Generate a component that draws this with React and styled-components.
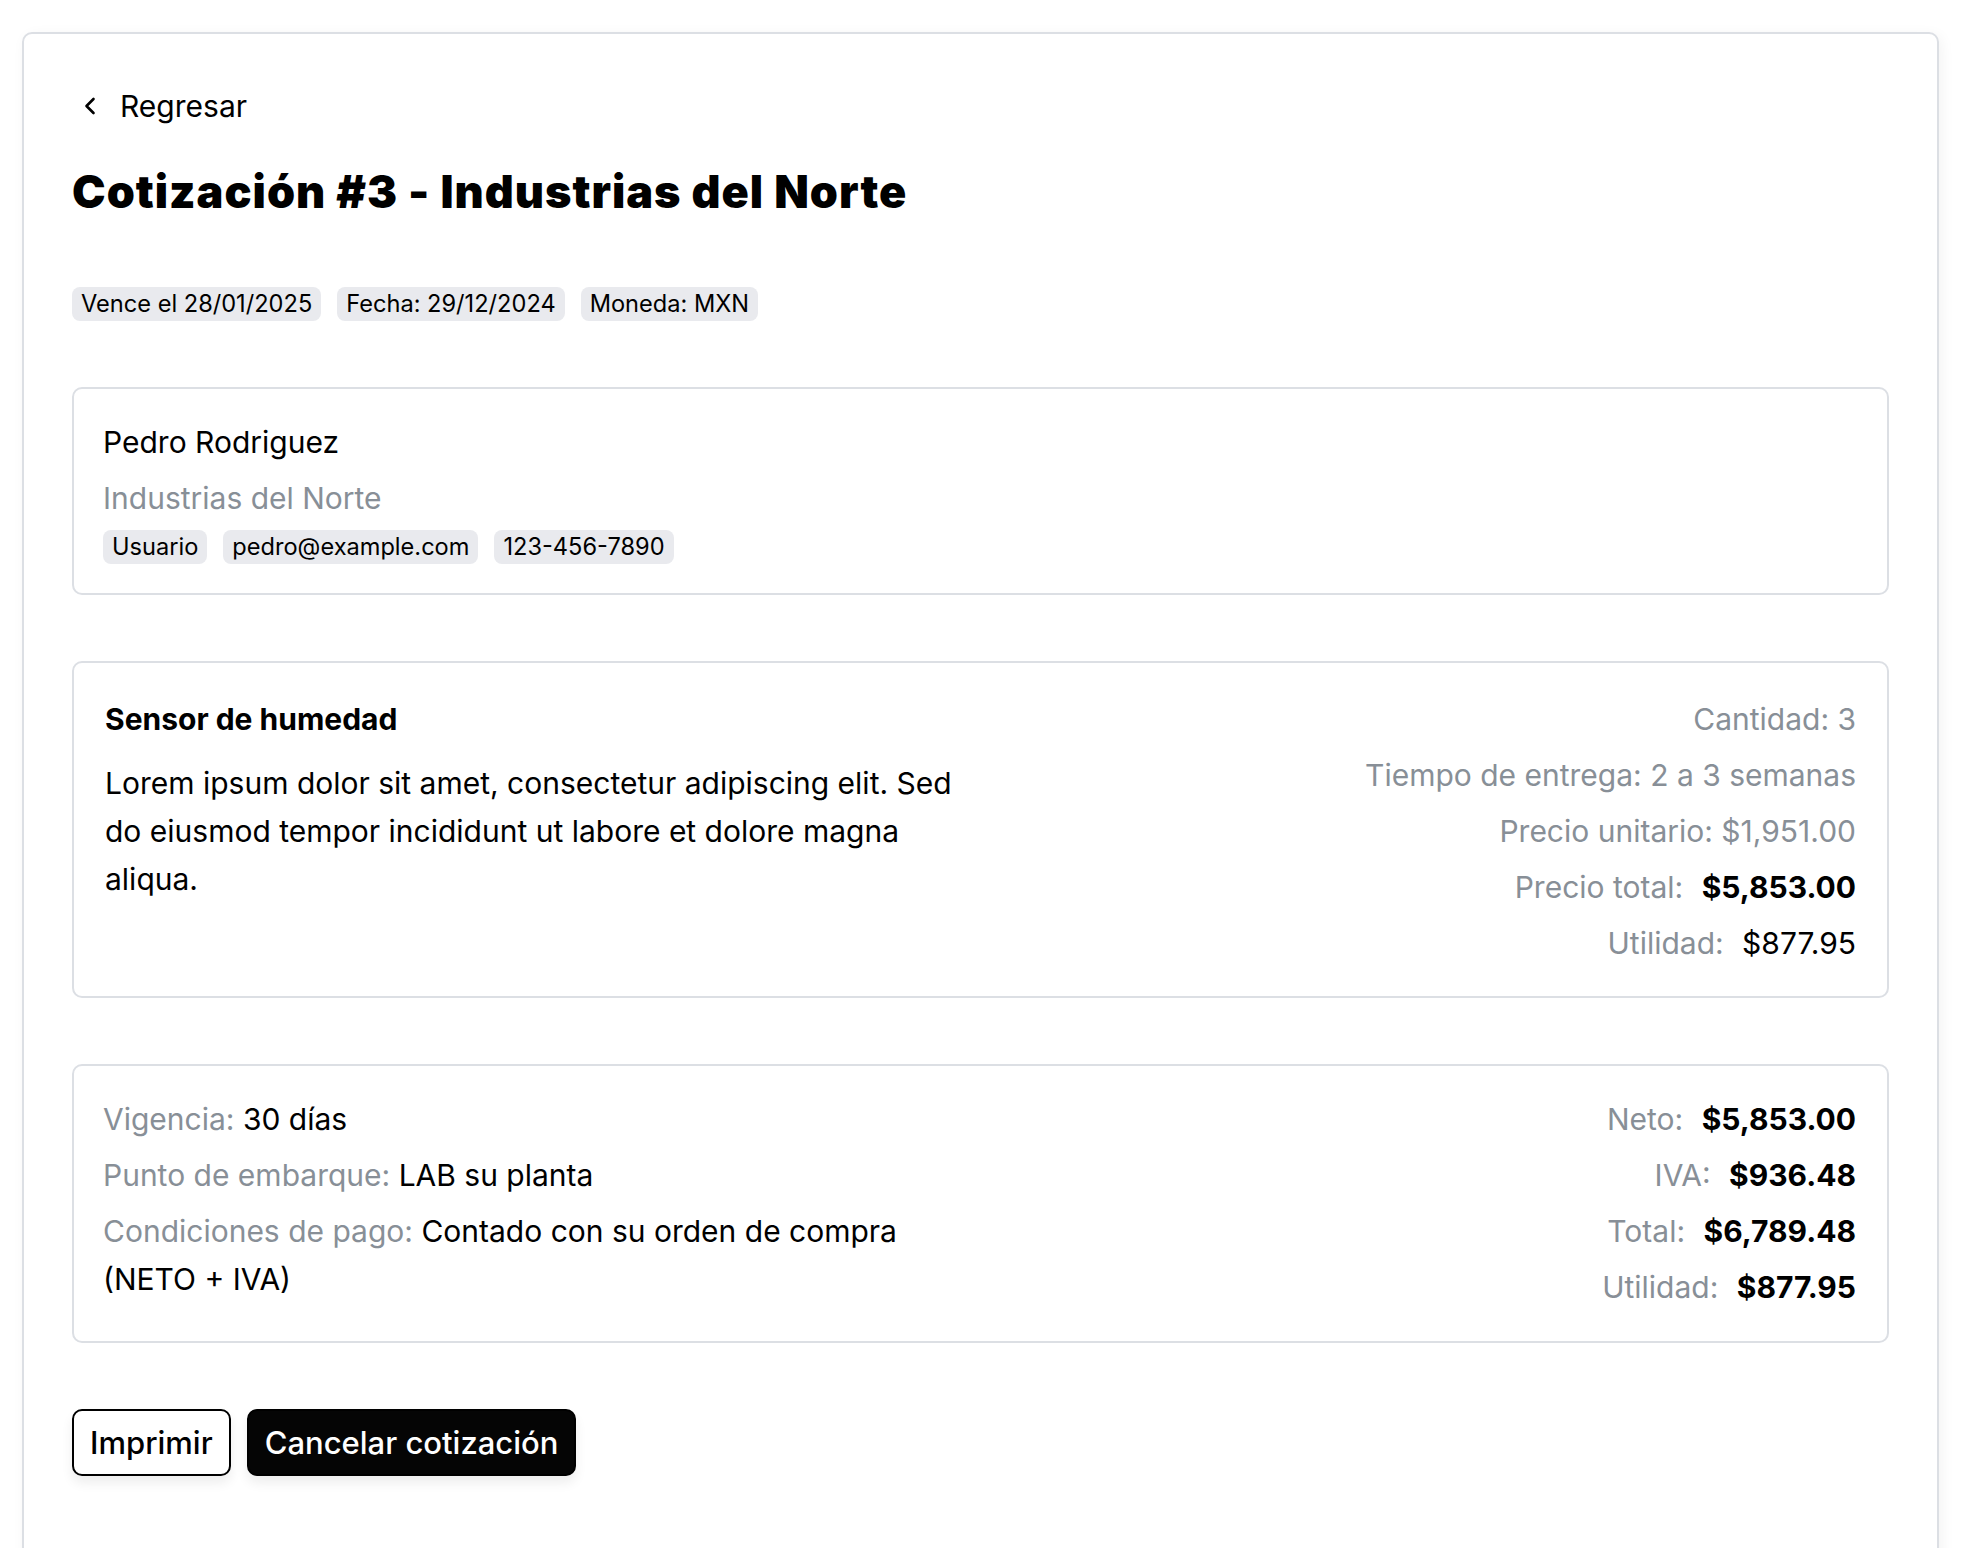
import React from "react"
import styled, { createGlobalStyle } from "styled-components"
import { ChevronLeft } from "lucide-react"

const GlobalStyle = createGlobalStyle`
  body {
    margin: 0;
    background: #ffffff;
    font-family: Inter, "Liberation Sans", sans-serif;
    color: #000000;
  }
`

const Page = styled.div`
  padding: 32px 27px 0 22px;
`

const Sheet = styled.main`
  border: 2px solid #dcdfe4;
  border-radius: 10px;
  padding: 48px 48px 120px;
  box-shadow: 3px 3px 14px rgba(0, 0, 0, 0.05);
  font-size: 30px;
  line-height: 48px;
`

const BackLink = styled.button`
  display: flex;
  align-items: center;
  gap: 16px;
  height: 48px;
  padding: 0 0 0 4px;
  border: 0;
  background: none;
  font: inherit;
  color: inherit;
  cursor: pointer;
`

const Title = styled.h1`
  margin: 34px 0 67px;
  font-size: 45px;
  line-height: 56px;
  font-weight: 900;
  letter-spacing: 1px;
`

const Sections = styled.div`
  display: flex;
  flex-direction: column;
  gap: 66px;
`

const ChipRow = styled.div`
  display: flex;
  flex-wrap: wrap;
  gap: 16px;
`

const Chip = styled.span`
  height: 34px;
  line-height: 34px;
  padding: 0 9px;
  border-radius: 8px;
  background: #e9eaee;
  font-size: 23.6px;
`

const Card = styled.section`
  border: 2px solid #dcdfe4;
  border-radius: 10px;
  padding: ${p => p.$pad};
`

const Stack = styled.div`
  display: flex;
  flex-direction: column;
  gap: ${p => p.$gap || 8}px;
`

const Muted = styled.span`
  color: #888f97;
`

const Split = styled.div`
  display: flex;
  justify-content: space-between;
  gap: 24px;
`

const LeftCol = styled.div`
  flex: 0 0 50%;
`

const RightCol = styled.div`
  display: flex;
  flex-direction: column;
  align-items: flex-end;
  gap: 8px;
  text-align: right;
  color: #888f97;
  white-space: nowrap;
`

const ProductName = styled.h2`
  margin: 0 0 16px;
  font-size: 30px;
  line-height: 48px;
  font-weight: 700;
`

const Description = styled.p`
  margin: 0;
`

const Value = styled.span`
  margin-left: ${p => (p.$spaced ? 10 : 0)}px;
  color: #000000;
  font-weight: ${p => (p.$bold ? 700 : 400)};
`

const Actions = styled.div`
  display: flex;
  gap: 16px;
`

const Button = styled.button`
  height: 67px;
  padding: 0 16px;
  border: 2px solid #000000;
  border-radius: 10px;
  font-family: inherit;
  font-size: 31px;
  font-weight: 500;
  background: ${p => (p.$dark ? "#050505" : "#ffffff")};
  color: ${p => (p.$dark ? "#ffffff" : "#000000")};
  box-shadow: 0 7px 12px rgba(0, 0, 0, 0.07);
  cursor: pointer;
`

const meta = ["Vence el 28/01/2025", "Fecha: 29/12/2024", "Moneda: MXN"]
const contact = ["Usuario", "pedro@example.com", "123-456-7890"]

const totals = [
  ["Neto:", "$5,853.00"],
  ["IVA:", "$936.48"],
  ["Total:", "$6,789.48"],
  ["Utilidad:", "$877.95"],
]

export default function App() {
  return (
    <>
      <GlobalStyle />
      <Page>
        <Sheet>
          <BackLink>
            <ChevronLeft size={28} strokeWidth={2.25} />
            Regresar
          </BackLink>
          <Title>Cotización #3 - Industrias del Norte</Title>

          <Sections>
            <ChipRow>
              {meta.map(m => (
                <Chip key={m}>{m}</Chip>
              ))}
            </ChipRow>

            <Card $pad="29px 29px">
              <Stack>
                <span>Pedro Rodriguez</span>
                <Muted>Industrias del Norte</Muted>
                <ChipRow>
                  {contact.map(c => (
                    <Chip key={c}>{c}</Chip>
                  ))}
                </ChipRow>
              </Stack>
            </Card>

            <Card $pad="32px 31px 29px">
              <Split>
                <LeftCol>
                  <ProductName>Sensor de humedad</ProductName>
                  <Description>
                    Lorem ipsum dolor sit amet, consectetur adipiscing elit. Sed do
                    eiusmod tempor incididunt ut labore et dolore magna aliqua.
                  </Description>
                </LeftCol>
                <RightCol>
                  <span>Cantidad: 3</span>
                  <span>Tiempo de entrega: 2 a 3 semanas</span>
                  <span>Precio unitario: $1,951.00</span>
                  <span>
                    Precio total: <Value $spaced $bold>$5,853.00</Value>
                  </span>
                  <span>
                    Utilidad: <Value $spaced>$877.95</Value>
                  </span>
                </RightCol>
              </Split>
            </Card>

            <Card $pad="29px 31px 30px 29px">
              <Split>
                <LeftCol>
                  <Stack>
                    <span>
                      <Muted>Vigencia:</Muted> 30 días
                    </span>
                    <span>
                      <Muted>Punto de embarque:</Muted> LAB su planta
                    </span>
                    <span>
                      <Muted>Condiciones de pago:</Muted> Contado con su orden de
                      compra (NETO + IVA)
                    </span>
                  </Stack>
                </LeftCol>
                <RightCol>
                  {totals.map(([label, amount]) => (
                    <span key={label}>
                      {label} <Value $spaced $bold>{amount}</Value>
                    </span>
                  ))}
                </RightCol>
              </Split>
            </Card>

            <Actions>
              <Button>Imprimir</Button>
              <Button $dark>Cancelar cotización</Button>
            </Actions>
          </Sections>
        </Sheet>
      </Page>
    </>
  )
}
